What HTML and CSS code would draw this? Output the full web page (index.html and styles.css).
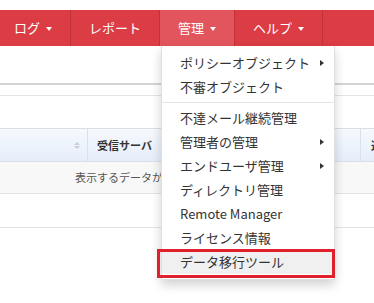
FILE: index.html
```html
<!DOCTYPE html>
<html lang="ja">
<head>
<meta charset="utf-8">
<link rel="stylesheet" href="styles.css">
</head>
<body>
<div class="top-gap"></div>
<nav class="navbar">
  <ul class="nav">
    <li class="nav-item">ログ<span class="caret"></span></li>
    <li class="nav-item">レポート</li>
    <li class="nav-item active">管理<span class="caret"></span>
      <ul class="dropdown">
        <li class="dd-item has-sub">ポリシーオブジェクト<span class="sub-arrow"></span></li>
        <li class="dd-item">不審オブジェクト</li>
        <li class="divider"></li>
        <li class="dd-item">不達メール継続管理</li>
        <li class="dd-item has-sub">管理者の管理<span class="sub-arrow"></span></li>
        <li class="dd-item has-sub">エンドユーザ管理<span class="sub-arrow"></span></li>
        <li class="dd-item">ディレクトリ管理</li>
        <li class="dd-item">Remote Manager</li>
        <li class="dd-item">ライセンス情報</li>
        <li class="dd-item hover">データ移行ツール</li>
      </ul>
      <div class="highlight-box"></div>
    </li>
    <li class="nav-item">ヘルプ<span class="caret"></span></li>
  </ul>
</nav>
<div class="content">
  <div class="panel-head"></div>
  <div class="sub-line"></div>
  <div class="table">
    <div class="thead">
      <div class="th th-first"><span class="sort"><span class="up"></span><span class="down"></span></span></div>
      <div class="th th-second">受信サーバ</div>
      <div class="th th-third">送信者</div>
    </div>
    <div class="empty-row"><span class="empty-text">表示するデータがありません</span></div>
  </div>
  <div class="bottom-line"></div>
</div>
</body>
</html>
```

FILE: styles.css
```css
* { box-sizing: border-box; }
html, body { margin: 0; padding: 0; }
body {
  width: 374px;
  height: 303px;
  overflow: hidden;
  background: #fff;
  font-family: "Noto Sans CJK JP", "Noto Sans", sans-serif;
  color: #333;
}
ul { list-style: none; margin: 0; padding: 0; }
.top-gap { height: 10px; }
.navbar {
  height: 36px;
  background: #dc3c44;
  position: relative;
  z-index: 5;
}
.nav {
  display: flex;
  height: 36px;
  margin-left: -4px;
}
.nav-item {
  position: relative;
  display: flex;
  align-items: center;
  padding: 0 18px;
  border-right: 1px solid #c3313a;
  color: #fff;
  font-size: 13px;
  line-height: 36px;
  white-space: nowrap;
}
.nav-item.active { background: #e2555c; }
.caret {
  display: inline-block;
  width: 0; height: 0;
  margin-left: 6px;
  margin-top: 2px;
  border-left: 3.5px solid transparent;
  border-right: 3.5px solid transparent;
  border-top: 4px solid #fff;
}
.dropdown {
  position: absolute;
  top: 36px;
  left: 1px;
  width: 174px;
  background: #fff;
  border: 1px solid rgba(0,0,0,0.12);
  border-top: none;
  box-shadow: 0 5px 10px rgba(0,0,0,0.18);
  padding: 5px 0;
  color: #333;
  line-height: 24px;
}
.dd-item {
  position: relative;
  height: 24px;
  padding-left: 18px;
  font-size: 13px;
  white-space: nowrap;
}
.dd-item.hover { background: #f0f0f0; }
.sub-arrow {
  position: absolute;
  right: 10px;
  top: 9px;
  width: 0; height: 0;
  border-top: 3.5px solid transparent;
  border-bottom: 3.5px solid transparent;
  border-left: 4px solid #333;
}
.divider {
  height: 1px;
  margin: 3px 0;
  background: #e5e5e5;
}
.highlight-box {
  position: absolute;
  left: -3px;
  top: 239px;
  width: 178px;
  height: 29px;
  border: 3px solid #e0202c;
}
.content { position: relative; }
.panel-head {
  height: 39px;
  border-bottom: 2px solid #d4d4d4;
}
.sub-line {
  height: 11px;
  border-bottom: 1px solid #e4e4e4;
}
.table { margin-top: 32px; }
.thead {
  display: flex;
  height: 34px;
  border-top: 1px solid #d9dfe7;
  border-bottom: 1px solid #d9dfe7;
  background: linear-gradient(#f6f9fd, #e5eef9);
}
.th {
  display: flex;
  align-items: center;
  font-size: 11px;
  font-weight: bold;
  color: #333;
  white-space: nowrap;
  overflow: hidden;
}
.th-first {
  width: 88px;
  flex: none;
  justify-content: flex-end;
  padding-right: 7px;
  border-right: 1px solid #d8e1ec;
}
.th-second {
  width: 273px;
  flex: none;
  padding-left: 9px;
  border-right: 1px solid #d8e1ec;
}
.th-third {
  flex: 1;
  padding-left: 10px;
}
.sort {
  display: flex;
  flex-direction: column;
  gap: 1px;
}
.sort .up, .sort .down {
  width: 0; height: 0;
  border-left: 3px solid transparent;
  border-right: 3px solid transparent;
}
.sort .up { border-bottom: 3px solid #c9ced4; }
.sort .down { border-top: 3px solid #c9ced4; }
.empty-row {
  height: 32px;
  line-height: 31px;
  padding-left: 75px;
  font-size: 11px;
  color: #555;
  background: #f8f8f8;
  border-bottom: 1px solid #e3e3e3;
  white-space: nowrap;
}
.empty-text {
  display: inline-block;
  width: 87px;
  overflow: hidden;
  vertical-align: top;
}
.bottom-line {
  height: 34px;
  border-bottom: 1px solid #e3e3e3;
}
```
